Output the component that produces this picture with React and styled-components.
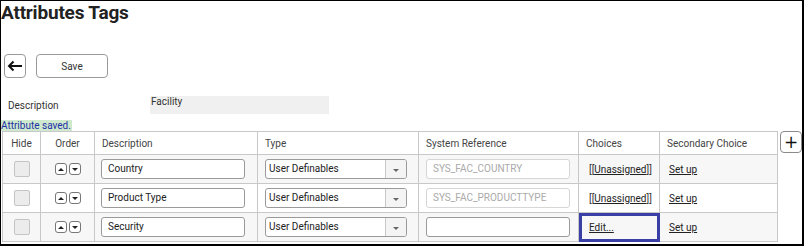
import React from 'react'
import styled, { createGlobalStyle } from 'styled-components';

const GlobalStyle = createGlobalStyle`
  html, body { margin: 0; padding: 0; background: #fff; }
  body { font-family: Roboto, "Liberation Sans", Arial, sans-serif; color: #333; }
`;

const Frame = styled.div`
  width: 804px;
  height: 246px;
  box-sizing: border-box;
  border-top: 1px solid #000;
  border-left: 1px solid #000;
  border-right: 2px solid #000;
  border-bottom: 2px solid #000;
  overflow: hidden;
`;

const Title = styled.h1`
  margin: 0;
  font-size: 19px;
  font-weight: 700;
  color: #222;
  line-height: 24px;
  letter-spacing: -0.2px;
`;

const Toolbar = styled.div`
  display: flex;
  gap: 10px;
  padding: 29px 0 0 3px;
`;

const Btn = styled.button`
  box-sizing: border-box;
  height: 24px;
  width: ${p => p.$w}px;
  background: #fff;
  border: 1px solid #9a9a9a;
  border-radius: 4px;
  font-family: Roboto, "Liberation Sans", Arial, sans-serif;
  font-size: 10px;
  color: #333;
  padding: 0;
  display: flex;
  align-items: center;
  justify-content: center;
`;

const FieldRow = styled.div`
  display: flex;
  align-items: flex-start;
  margin-top: 18px;
  height: 24px;
`;

const FieldLabel = styled.span`
  width: 142px;
  padding: 4px 0 0 7px;
  font-size: 10px;
  color: #333;
`;

const ReadOnly = styled.div`
  width: 178px;
  height: 18px;
  background: #f0f0f0;
  font-size: 10px;
  color: #333;
  padding: 0 0 0 1px;
  line-height: 12px;
`;

const Notice = styled.div`
  width: fit-content;
  background: #cfe9cf;
  color: #1d2fa5;
  font-size: 10px;
  line-height: 11px;
  height: 11px;
  padding: 0 1px 0 0;
`;

const TableWrap = styled.div`
  display: flex;
  align-items: flex-start;
  gap: 2px;
  padding-left: 1px;
`;

const Table = styled.table`
  border-collapse: collapse;
  table-layout: fixed;
  width: 775px;
  font-size: 10px;
  color: #333;
  border: 1px solid #c8c8c8;
  th, td { border: 1px solid #c8c8c8; }
`;

const Th = styled.th`
  height: 22px;
  font-weight: 400;
  text-align: ${p => p.$center ? 'center' : 'left'};
  padding: 0 0 0 ${p => p.$center ? 0 : 7}px;
  color: #444;
  background: #fff;
`;

const Row = styled.tr`
  background: ${p => p.$shade ? '#f7f7f7' : '#fff'};
`;

const Td = styled.td`
  height: 28px;
  padding: 0 0 0 ${p => p.$pl ?? 6}px;
  text-align: ${p => p.$center ? 'center' : 'left'};
  vertical-align: middle;
  ${p => p.$focus ? 'outline: 3px solid #3a3fa6; outline-offset: -3px;' : ''}
`;

const Check = styled.span`
  display: inline-block;
  width: 16px;
  height: 16px;
  box-sizing: border-box;
  background: #ececec;
  border: 1px solid #c4c4c4;
  border-radius: 2px;
  vertical-align: middle;
`;

const Arrows = styled.span`
  display: inline-flex;
  gap: 2px;
  vertical-align: middle;
`;

const ArrowBtn = styled.span`
  box-sizing: border-box;
  width: 12px;
  height: 12px;
  border: 1px solid #777;
  border-radius: 3px;
  background: #fff;
  display: flex;
  align-items: center;
  justify-content: center;
  &::after {
    content: '';
    border-left: 3px solid transparent;
    border-right: 3px solid transparent;
    ${p => p.$down ? 'border-top: 3px solid #222;' : 'border-bottom: 3px solid #222;'}
  }
`;

const TextBox = styled.div`
  box-sizing: border-box;
  width: 144px;
  height: 20px;
  border: 1px solid ${p => p.$disabled ? '#d6d6d6' : '#9a9a9a'};
  border-radius: 3px;
  background: #fff;
  padding: 0 6px;
  line-height: 18px;
  font-size: 10px;
  color: ${p => p.$disabled ? '#aaa' : '#222'};
  white-space: nowrap;
  overflow: hidden;
`;

const Select = styled.div`
  box-sizing: border-box;
  width: 142px;
  height: 20px;
  border: 1px solid #9a9a9a;
  border-radius: 3px;
  background: #fff;
  display: flex;
  font-size: 10px;
  color: #222;
  overflow: hidden;
`;

const SelectText = styled.span`
  flex: 1;
  padding-left: 3px;
  line-height: 18px;
`;

const Caret = styled.span`
  width: 20px;
  border-left: 1px solid #c8c8c8;
  background: #f4f4f4;
  display: flex;
  align-items: center;
  justify-content: center;
  &::after {
    content: '';
    border-left: 3px solid transparent;
    border-right: 3px solid transparent;
    border-top: 3px solid #666;
    margin-top: 2px;
  }
`;

const Link = styled.span`
  text-decoration: underline;
  color: #222;
`;

const PlusBtn = styled.button`
  box-sizing: border-box;
  width: 22px;
  height: 22px;
  border: 1px solid #8a8a8a;
  border-radius: 4px;
  background: #fff;
  font-size: 17px;
  line-height: 18px;
  padding: 0;
  color: #111;
  font-family: "DejaVu Sans", sans-serif;
`;

const rows = [
  { desc: 'Country', ref: 'SYS_FAC_COUNTRY', choice: 'unassigned' },
  { desc: 'Product Type', ref: 'SYS_FAC_PRODUCTTYPE', choice: 'unassigned' },
  { desc: 'Security', ref: '', choice: 'edit' },
];

export default function App() {
  return (
    <Frame>
      <GlobalStyle />
      <Title>Attributes Tags</Title>
      <Toolbar>
        <Btn $w={22}>
          <svg width="16" height="12" viewBox="0 0 16 12">
            <path d="M15 6H2M6.5 1.5L2 6l4.5 4.5" fill="none" stroke="#111" strokeWidth="2" />
          </svg>
        </Btn>
        <Btn $w={72}>Save</Btn>
      </Toolbar>
      <FieldRow>
        <FieldLabel>Description</FieldLabel>
        <ReadOnly>Facility</ReadOnly>
      </FieldRow>
      <Notice>Attribute saved.</Notice>
      <TableWrap>
        <Table>
          <colgroup>
            <col style={{ width: 38 }} />
            <col style={{ width: 54 }} />
            <col style={{ width: 163 }} />
            <col style={{ width: 161 }} />
            <col style={{ width: 160 }} />
            <col style={{ width: 81 }} />
            <col style={{ width: 118 }} />
          </colgroup>
          <thead>
            <tr>
              <Th $center>Hide</Th>
              <Th $center>Order</Th>
              <Th>Description</Th>
              <Th>Type</Th>
              <Th>System Reference</Th>
              <Th>Choices</Th>
              <Th>Secondary Choice</Th>
            </tr>
          </thead>
          <tbody>
            {rows.map((r, i) => (
              <Row key={r.desc} $shade={i !== 1}>
                <Td $center $pl={0}><Check /></Td>
                <Td $center $pl={0}>
                  <Arrows>
                    <ArrowBtn />
                    <ArrowBtn $down />
                  </Arrows>
                </Td>
                <Td><TextBox>{r.desc}</TextBox></Td>
                <Td $pl={7}>
                  <Select>
                    <SelectText>User Definables</SelectText>
                    <Caret />
                  </Select>
                </Td>
                <Td $pl={7}><TextBox $disabled={!!r.ref}>{r.ref}</TextBox></Td>
                <Td $pl={10} $focus={r.choice === 'edit'}>
                  {r.choice === 'edit'
                    ? <Link>Edit...</Link>
                    : <span>[[<Link>Unassigned</Link>]]</span>}
                </Td>
                <Td $pl={9}><Link>Set up</Link></Td>
              </Row>
            ))}
          </tbody>
        </Table>
        <PlusBtn>+</PlusBtn>
      </TableWrap>
    </Frame>
  );
}
